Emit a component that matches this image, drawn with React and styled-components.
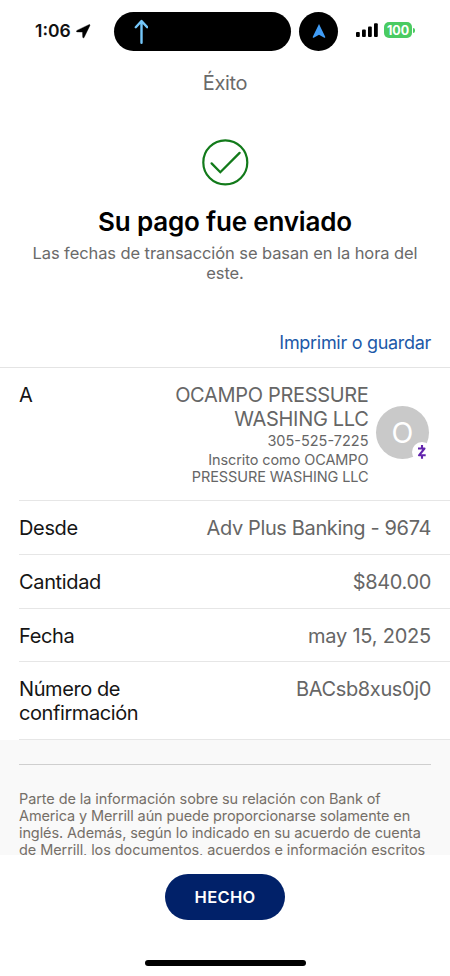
import React from "react";
import styled, { createGlobalStyle } from "styled-components";

const GlobalStyle = createGlobalStyle`
  *, *::before, *::after { box-sizing: border-box; }
  body {
    margin: 0;
    background: #fff;
    font-family: Inter, "Liberation Sans", sans-serif;
    color: #111;
  }
`;

const Screen = styled.div`
  width: 450px;
  height: 976px;
  display: flex;
  flex-direction: column;
  overflow: hidden;
  background: #fff;
`;

const StatusBar = styled.header`
  height: 62px;
  flex: none;
  display: flex;
  align-items: center;
  padding-left: 35px;
`;

const Clock = styled.div`
  width: 37px;
  font-size: 17.5px;
  line-height: 20px;
  font-weight: 600;
  letter-spacing: 0;
  white-space: nowrap;
`;

const LocationIcon = styled.svg`
  width: 15px;
  height: 15px;
  margin-left: 3.5px;
`;

const Island = styled.div`
  width: 177px;
  height: 39px;
  margin-left: 23.5px;
  border-radius: 20px;
  background: #000;
  display: flex;
  align-items: center;
  padding-left: 20px;
`;

const IslandBubble = styled.div`
  width: 39px;
  height: 39px;
  margin-left: 8px;
  border-radius: 50%;
  background: #000;
  display: grid;
  place-items: center;
`;

const SignalIcon = styled.svg`
  width: 22px;
  height: 14px;
  margin-left: 18px;
  margin-top: -2px;
`;

const Battery = styled.div`
  width: 28px;
  height: 16px;
  margin-left: 6px;
  margin-top: -2px;
  border-radius: 5px;
  background: #4acb62;
  color: #fff;
  font-size: 12.5px;
  line-height: 17px;
  font-weight: 700;
  text-align: center;
`;

const BatteryTip = styled.div`
  width: 2px;
  height: 5px;
  margin: -2px 0 0 1px;
  border-radius: 0 2px 2px 0;
  background: #4acb62;
`;

const NavTitle = styled.h1`
  margin: 0;
  height: 42px;
  line-height: 42px;
  text-align: center;
  font-size: 20px;
  font-weight: 400;
  letter-spacing: -0.35px;
  color: #6a6a6a;
`;

const Summary = styled.section`
  height: 211px;
  padding-top: 34px;
  display: flex;
  flex-direction: column;
  align-items: center;
`;

const SuccessIcon = styled.svg`
  width: 48px;
  height: 48px;
`;

const Headline = styled.h2`
  margin: 19px 0 0;
  font-size: 26px;
  line-height: 34px;
  font-weight: 600;
  letter-spacing: -0.18px;
  color: #000;
  white-space: nowrap;
`;

const Note = styled.p`
  margin: 4px 0 0;
  font-size: 16.5px;
  line-height: 20px;
  letter-spacing: -0.09px;
  text-align: center;
  white-space: nowrap;
  color: #6a6a6a;
`;

const SaveLink = styled.a`
  height: 52px;
  line-height: 55px;
  padding-right: 19px;
  text-align: right;
  font-size: 18px;
  letter-spacing: -0.3px;
  color: #1c59a8;
`;

const Details = styled.section`
  flex: none;
  border-top: 1px solid #e4e4e4;
`;

const Row = styled.div`
  height: ${(p) => p.$height}px;
  margin-left: 19px;
  padding: 15px 19px 0 0;
  border-bottom: 1px solid #e6e6e6;
  display: flex;
  justify-content: space-between;
  align-items: flex-start;
`;

const Label = styled.div`
  font-size: 20px;
  line-height: 24px;
  letter-spacing: ${(p) => p.$track || "-0.35px"};
  color: #151515;
  white-space: nowrap;
`;

const Value = styled(Label)`
  color: #666;
`;

const Payee = styled.div`
  display: flex;
  align-items: flex-start;
  gap: 7.5px;
`;

const PayeeText = styled.div`
  text-align: right;
`;

const PayeeDetail = styled.div`
  font-size: 14.5px;
  line-height: 17px;
  margin-top: ${(p) => p.$gap || 0}px;
  letter-spacing: ${(p) => p.$track || "-0.1px"};
  color: #666;
  white-space: nowrap;
`;

const Avatar = styled.div`
  position: relative;
  width: 53px;
  height: 53px;
  margin: 23px 2px 0 0;
  border-radius: 50%;
  background: #c9c9c9;
  color: #fff;
  font-size: 28.5px;
  line-height: 54px;
  text-align: center;
`;

const ZelleBadge = styled.svg`
  position: absolute;
  right: -4px;
  bottom: -4px;
  width: 22px;
  height: 22px;
`;

const Disclosure = styled.section`
  flex: none;
  height: 115px;
  overflow: hidden;
  padding: 24px 19px 0;
  background: #f9f9f9;
`;

const DisclosureText = styled.p`
  margin: 0;
  padding-top: 25px;
  border-top: 1px solid #cfcfcf;
  font-size: 14.5px;
  line-height: 17px;
  color: #756f68;
  white-space: nowrap;
`;

const Tracked = styled.span`
  display: block;
  letter-spacing: ${(p) => p.$track};
`;

const Footer = styled.footer`
  flex: 1;
  padding-top: 19px;
  display: flex;
  flex-direction: column;
  align-items: center;
`;

const DoneButton = styled.button`
  width: 120px;
  height: 46px;
  padding: 0;
  border: 0;
  border-radius: 23px;
  background: #012169;
  color: #fff;
  font: 600 16.5px/45px Inter, sans-serif;
  letter-spacing: 0.3px;
`;

const HomeIndicator = styled.div`
  width: 161px;
  height: 6px;
  margin-top: 40px;
  border-radius: 3px;
  background: #000;
`;

export default function App() {
  return (
    <Screen>
      <GlobalStyle />
      <StatusBar>
        <Clock>1:06</Clock>
        <LocationIcon viewBox="0 0 15 15">
          <path
            d="M12.9.7 1 6.4C.1 6.9.3 7.9 1.200 7.900l5.300.2.2 5c0 1 1 1.100 1.500.2L13.800 1.700C14.200.9 13.700.3 12.900.7Z"
            fill="#000"
            stroke="#000"
            strokeWidth=".4"
          />
        </LocationIcon>
        <Island>
          <svg width="14" height="25" viewBox="0 0 14 25" fill="none" stroke="#75c7fa" strokeWidth="2.4">
            <path d="M7.500 23.800V2.500M1.800 8.200 7.500 2l5.700 6.200" strokeLinejoin="round" strokeLinecap="round" />
          </svg>
        </Island>
        <IslandBubble>
          <svg width="14" height="15" viewBox="0 0 14 15">
            <path d="M7 0 13.200 12.700q.4 1.400-.9 1L7 10.700l-5.300 3Q.4 14.100.8 12.700Z" fill="#409cf5" />
          </svg>
        </IslandBubble>
        <SignalIcon viewBox="0 0 22 14" fill="#000">
          <rect x="0" y="9" width="3.8" height="5" rx="1" />
          <rect x="6" y="6.4" width="3.8" height="7.6" rx="1" />
          <rect x="12" y="3.4" width="3.8" height="10.6" rx="1" />
          <rect x="18" y="0.3" width="3.8" height="13.7" rx="1" />
        </SignalIcon>
        <Battery>100</Battery>
        <BatteryTip />
      </StatusBar>
      <NavTitle>Éxito</NavTitle>
      <Summary>
        <SuccessIcon viewBox="0 0 48 48" fill="none" stroke="#127a1a">
          <circle cx="24.3" cy="24.4" r="22" strokeWidth="2.2" />
          <path d="m10.600 25.400 8.700 8.800 19.300-19.300" strokeWidth="2.3" strokeLinecap="round" />
        </SuccessIcon>
        <Headline>Su pago fue enviado</Headline>
        <Note>
          Las fechas de transacción se basan en la hora del
          <br />
          este.
        </Note>
      </Summary>
      <SaveLink>Imprimir o guardar</SaveLink>
      <Details>
        <Row $height={133}>
          <Label>A</Label>
          <Payee>
            <PayeeText>
              <Value $track="-0.32px">OCAMPO PRESSURE</Value>
              <Value $track="-0.32px">WASHING LLC</Value>
              <PayeeDetail $gap={1} $track="0">305-525-7225</PayeeDetail>
              <PayeeDetail $gap={2}>Inscrito como OCAMPO</PayeeDetail>
              <PayeeDetail>PRESSURE WASHING LLC</PayeeDetail>
            </PayeeText>
            <Avatar>
              O
              <ZelleBadge viewBox="0 0 22 22">
                <circle cx="11" cy="11" r="10" fill="#fff" />
                <path
                  d="M7 7.500h6.500L8 14.300h6.700M11 4v3.500M11 14.300v3.500"
                  fill="none"
                  stroke="#6224ad"
                  strokeWidth="2.1"
                  strokeLinejoin="round"
                />
              </ZelleBadge>
            </Avatar>
          </Payee>
        </Row>
        <Row $height={54}>
          <Label>Desde</Label>
          <Value $track="-0.37px">Adv Plus Banking - 9674</Value>
        </Row>
        <Row $height={54}>
          <Label>Cantidad</Label>
          <Value>$840.00</Value>
        </Row>
        <Row $height={53}>
          <Label>Fecha</Label>
          <Value $track="-0.22px">may 15, 2025</Value>
        </Row>
        <Row $height={78}>
          <Label $track="-0.42px">
            Número de
            <br />
            confirmación
          </Label>
          <Value $track="-0.37px">BACsb8xus0j0</Value>
        </Row>
      </Details>
      <Disclosure>
        <DisclosureText>
          <Tracked $track="-0.09px">Parte de la información sobre su relación con Bank of</Tracked>
          <Tracked $track="-0.12px">America y Merrill aún puede proporcionarse solamente en</Tracked>
          <Tracked $track="-0.11px">inglés. Además, según lo indicado en su acuerdo de cuenta</Tracked>
          <Tracked $track="-0.08px">de Merrill, los documentos, acuerdos e información escritos</Tracked>
        </DisclosureText>
      </Disclosure>
      <Footer>
        <DoneButton>HECHO</DoneButton>
        <HomeIndicator />
      </Footer>
    </Screen>
  );
}
